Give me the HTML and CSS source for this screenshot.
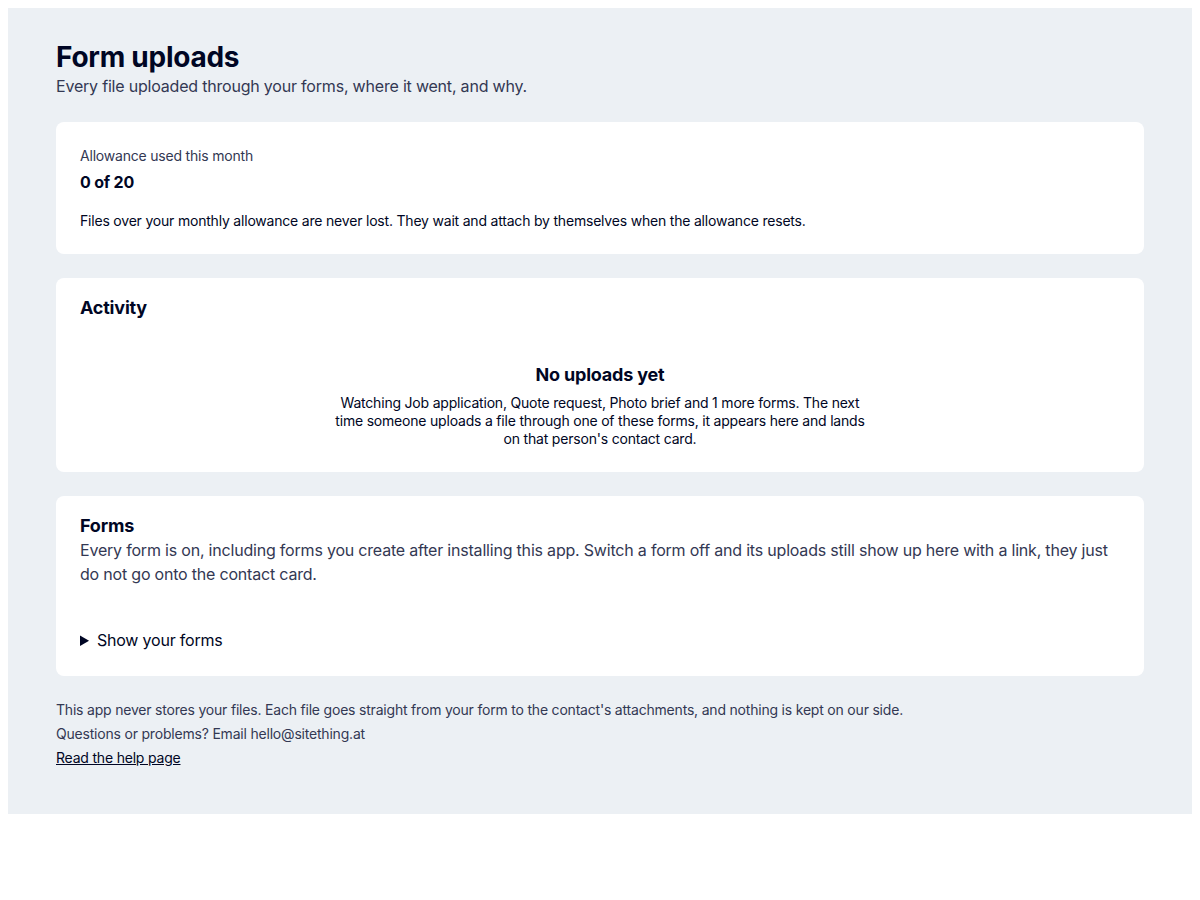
FILE: index.html
```html
<!DOCTYPE html>
<html lang="en">
<head>
<meta charset="utf-8">
<title>Form uploads</title>
<link rel="stylesheet" href="styles.css">
</head>
<body>
<main class="page">
  <header class="page-header">
    <h1 class="page-title">Form uploads</h1>
    <p class="page-subtitle">Every file uploaded through your forms, where it went, and why.</p>
  </header>

  <section class="card">
    <div class="card-content">
      <div class="stat-label">Allowance used this month</div>
      <div class="stat-value">0 of 20</div>
      <p class="stat-note">Files over your monthly allowance are never lost. They wait and attach by themselves when the allowance resets.</p>
    </div>
  </section>

  <section class="card">
    <div class="card-header">
      <h2 class="card-title">Activity</h2>
    </div>
    <div class="card-content">
      <div class="empty-state">
        <h3 class="empty-title">No uploads yet</h3>
        <p class="empty-text">Watching Job application, Quote request, Photo brief and 1 more forms. The next time someone uploads a file through one of these forms, it appears here and lands on that person's contact card.</p>
      </div>
    </div>
  </section>

  <section class="card">
    <div class="card-header">
      <h2 class="card-title">Forms</h2>
      <p class="card-subtitle">Every form is on, including forms you create after installing this app. Switch a form off and its uploads still show up here with a link, they just do not go onto the contact card.</p>
    </div>
    <div class="card-content">
      <details class="forms-toggle">
        <summary>Show your forms</summary>
      </details>
    </div>
  </section>

  <footer class="page-footer">
    <p>This app never stores your files. Each file goes straight from your form to the contact's attachments, and nothing is kept on our side.</p>
    <p>Questions or problems? Email hello@sitething.at</p>
    <p><a class="help-link" href="#">Read the help page</a></p>
  </footer>
</main>
</body>
</html>
```

FILE: styles.css
```css
body {
  margin: 8px;
  font-family: Inter, "Noto Sans", "Liberation Sans", sans-serif;
  letter-spacing: -0.2px;
  color: #000624;
  background: #ffffff;
}

.page {
  background: #ecf0f4;
  padding: 31px 48px 44px;
  display: flex;
  flex-direction: column;
  gap: 24px;
}

.page-header {
  display: flex;
  flex-direction: column;
}

.page-title {
  margin: 0;
  font-size: 28px;
  line-height: 36px;
  font-weight: 700;
  letter-spacing: -0.25px;
  color: #000624;
}

.page-subtitle {
  margin: -1px 0 0;
  font-size: 16px;
  line-height: 24px;
  color: #333853;
}

.card {
  background: #ffffff;
  border-radius: 8px;
}

.card-header {
  padding: 18px 24px;
}

.card-title {
  margin: 0;
  font-size: 18px;
  line-height: 24px;
  font-weight: 700;
  color: #000624;
}

.card-subtitle {
  margin: 0;
  font-size: 16px;
  line-height: 24px;
  color: #333853;
}

.card-content {
  padding: 24px;
}

.stat-label {
  margin-top: 1px;
  font-size: 14px;
  line-height: 18px;
  color: #333853;
}

.stat-value {
  margin-top: 5px;
  font-size: 16px;
  line-height: 24px;
  font-weight: 700;
}

.stat-note {
  margin: 18px 0 0;
  font-size: 14px;
  line-height: 18px;
}

.empty-state {
  display: flex;
  flex-direction: column;
  align-items: center;
  text-align: center;
}

.empty-title {
  margin: 1px 0 0;
  font-size: 18px;
  line-height: 24px;
  font-weight: 700;
}

.empty-text {
  margin: 7px 0 0;
  max-width: 540px;
  font-size: 14px;
  line-height: 18px;
}

.forms-toggle summary {
  font-size: 16px;
  line-height: 24px;
  cursor: pointer;
  color: #000624;
}

.page-footer {
  display: flex;
  flex-direction: column;
  margin-top: -2px;
}

.page-footer p {
  margin: 0;
  font-size: 14px;
  line-height: 24px;
  color: #333853;
}

.help-link {
  color: #000624;
  text-decoration: underline;
}
```
